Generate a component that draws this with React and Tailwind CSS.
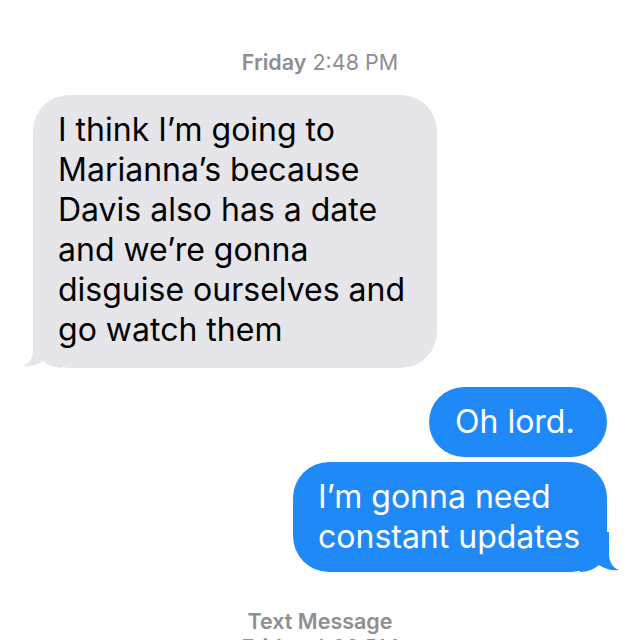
import React from 'react';

const Tail = ({ color, side }) => (
  <svg
    width="40"
    height="40"
    viewBox="0 0 40 40"
    className={side === 'left' ? 'absolute bottom-0 -left-[11px]' : 'absolute bottom-0 -right-[13px] -scale-x-100'}
  >
    <path d="M11 0 L11 22 C11 30 7 36 1 38 C8 39 15 37 21 33 C26 37 32 40 40 40 L40 0 Z" fill={color} />
  </svg>
);

const lines = [
  'I think I’m going to',
  'Marianna’s because',
  'Davis also has a date',
  'and we’re gonna',
  'disguise ourselves and',
  'go watch them',
];

const App = () => {
  return (
    <div className="w-[640px] h-[640px] overflow-hidden bg-white font-['Inter',sans-serif]">
      <div className="pt-[49px] text-center text-[21.5px] leading-[26px] text-[#8e8e93]">
        <span className="font-semibold">Friday</span> 2:48 PM
      </div>

      <div className="mt-[20px] flex">
        <div className="relative ml-[33px] w-[404px] rounded-[36px] bg-[#e5e5ea] pt-[15px] pb-[18px] pl-[25px] text-[32px] leading-[40px] text-black whitespace-nowrap">
          <Tail color="#e5e5ea" side="left" />
          <div className="relative">
            {lines.map((l) => (
              <div key={l}>{l}</div>
            ))}
          </div>
        </div>
      </div>

      <div className="mt-[19px] flex flex-col items-end gap-[5px] pr-[33px]">
        <div className="w-[178px] rounded-[36px] bg-[#1f8af7] pl-[26px] py-[15px] text-[32px] leading-[40px] text-white whitespace-nowrap">
          Oh lord.
        </div>
        <div className="relative w-[314px] rounded-[36px] bg-[#1f8af7] pl-[25px] py-[15px] text-[32px] leading-[40px] text-white whitespace-nowrap">
          <Tail color="#1f8af7" side="right" />
          <div className="relative">
            <div>I’m gonna need</div>
            <div>constant updates</div>
          </div>
        </div>
      </div>

      <div className="mt-[36px] text-center text-[21.5px] leading-[26px] font-semibold text-[#8e8e93]">
        Text Message
      </div>
      <div className="text-center text-[21.5px] leading-[26px] text-[#8e8e93]">
        <span className="font-semibold">Friday</span> 4:08 PM
      </div>
    </div>
  );
};

export default App;
